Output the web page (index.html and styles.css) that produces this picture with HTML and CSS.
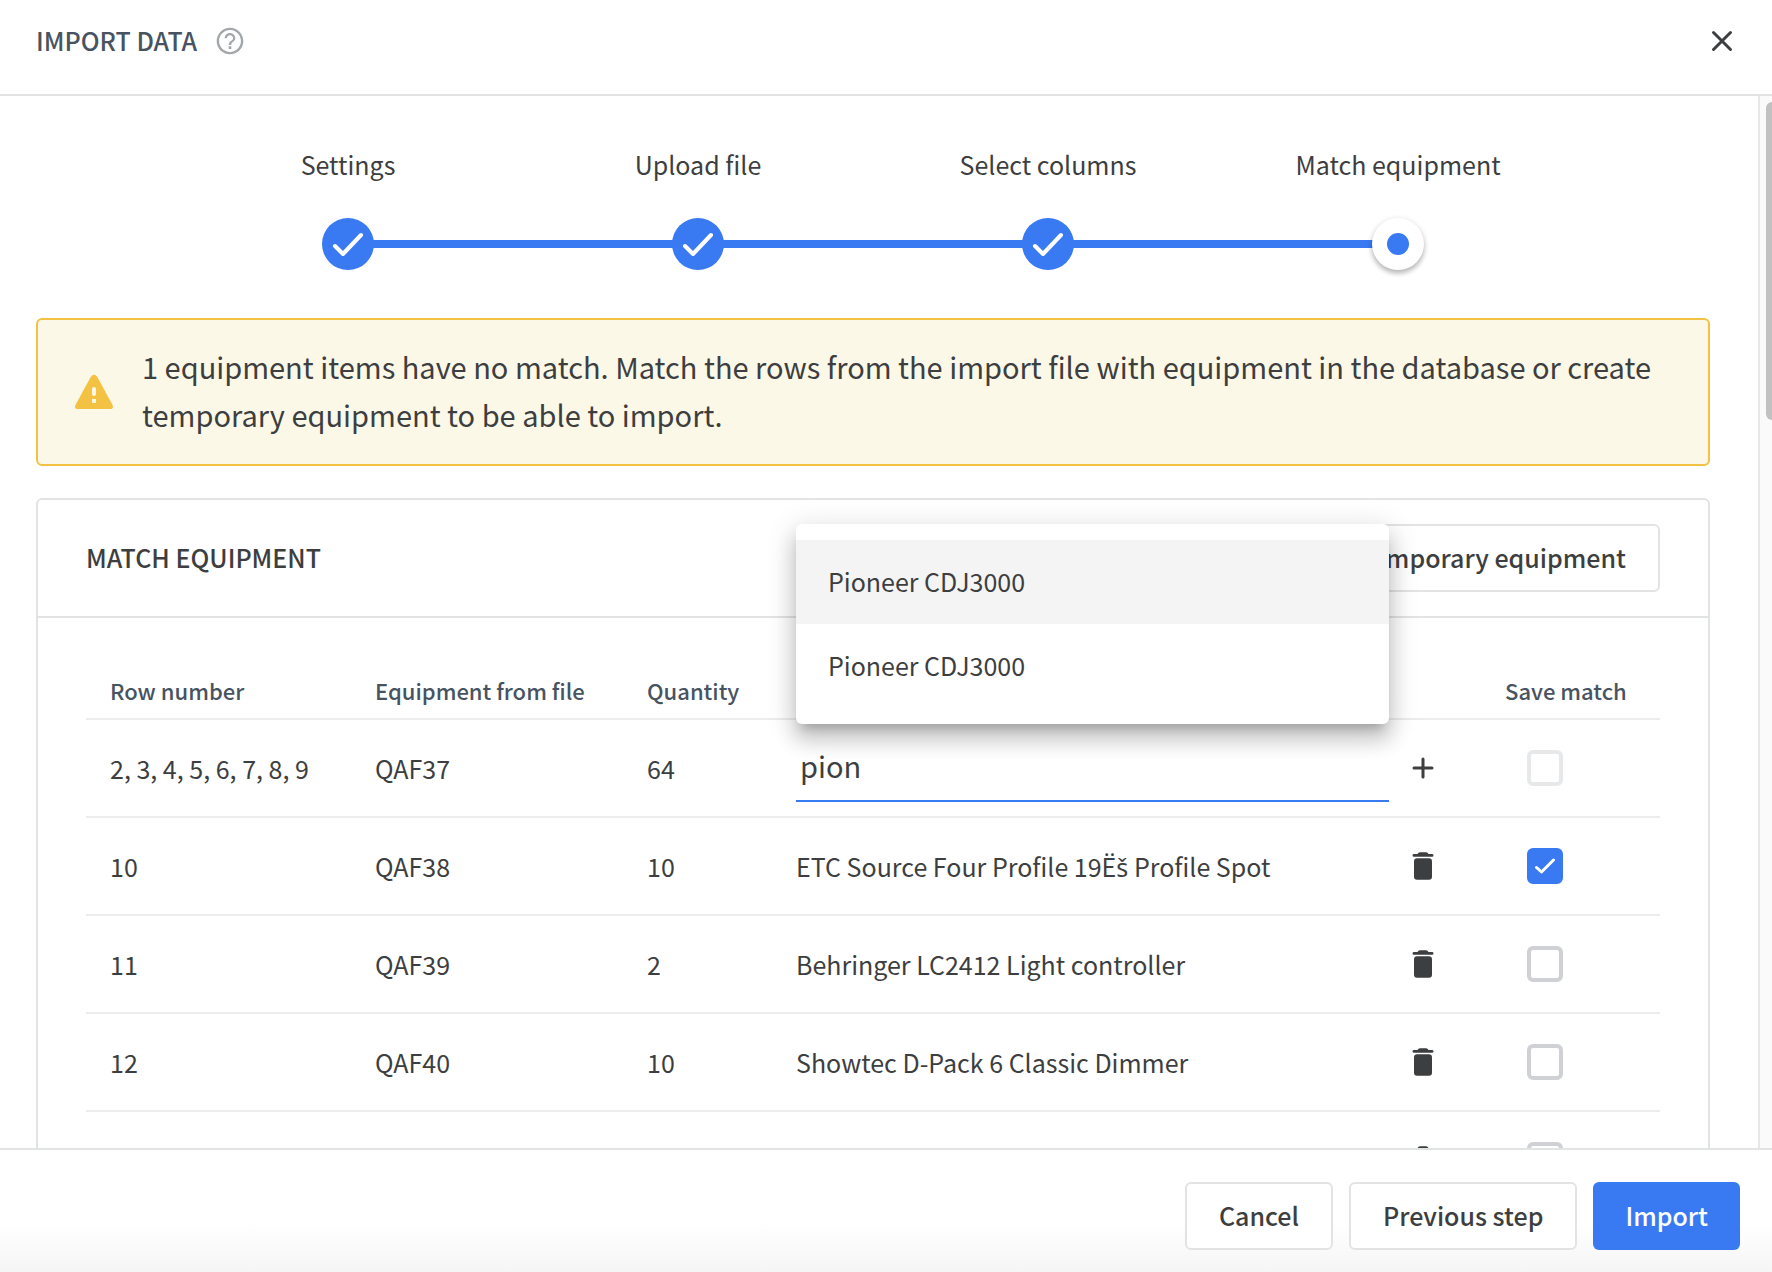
FILE: index.html
```html
<!DOCTYPE html>
<html lang="en">
<head>
<meta charset="utf-8">
<title>Import data</title>
<meta name="viewport" content="width=device-width, initial-scale=1">
<link rel="stylesheet" href="styles.css">
</head>
<body>
<svg class="sprite" aria-hidden="true">
  <symbol id="check" viewBox="0 0 32 32"><path d="M3 18l8 8L29 7" fill="none" stroke="currentColor" stroke-width="4" stroke-linecap="round" stroke-linejoin="round"/></symbol>
  <symbol id="check-small" viewBox="0 0 20 20"><path d="M1.500 11.500l5 4.500L18.500 4" fill="none" stroke="currentColor" stroke-width="3" stroke-linecap="round" stroke-linejoin="round"/></symbol>
  <symbol id="trash" viewBox="0 0 32 32"><path d="M7 4h3.500q.8-1.700 2.500-1.700h6q1.700 0 2.500 1.700H25q1.500 0 1.500 1.400T25 6.800H7q-1.500 0-1.500-1.400T7 4z" fill="currentColor"/><rect x="7" y="8.300" width="18" height="21.400" rx="3" fill="currentColor"/></symbol>
  <symbol id="plus" viewBox="0 0 32 32"><path d="M16 7v18M7 16h18" fill="none" stroke="currentColor" stroke-width="3" stroke-linecap="round"/></symbol>
</svg>
<div class="dialog">
  <header class="dialog-header">
    <h1 class="dialog-title">IMPORT DATA</h1>
    <button class="icon-button help" type="button" aria-label="Help">
      <svg class="icon" viewBox="0 0 24 24"><path fill="currentColor" d="M11 18h2v-2h-2v2zm1-16C6.480 2 2 6.480 2 12s4.480 10 10 10 10-4.480 10-10S17.520 2 12 2zm0 18.200c-4.500 0-8.200-3.700-8.200-8.200S7.500 3.800 12 3.800s8.200 3.700 8.200 8.200-3.700 8.200-8.200 8.200zM12 6c-2.210 0-4 1.790-4 4h1.700c0-1.300 1-2.300 2.300-2.300s2.300 1 2.300 2.300c0 2-3.200 1.750-3.200 5h1.800c0-2.250 3.100-2.500 3.100-5 0-2.210-1.790-4-4-4z"/></svg>
    </button>
    <button class="icon-button close" type="button" aria-label="Close">
      <svg class="icon" viewBox="0 0 32 32"><path d="M7.500 7.500l17 17M24.500 7.500l-17 17" fill="none" stroke="currentColor" stroke-width="3" stroke-linecap="round"/></svg>
    </button>
  </header>
  <div class="dialog-body">
    <main class="content">
      <ol class="stepper">
        <li class="step"><span>Settings</span><span class="dot"><svg class="icon"><use href="#check"/></svg></span></li>
        <li class="step"><span>Upload file</span><span class="dot"><svg class="icon"><use href="#check"/></svg></span></li>
        <li class="step"><span>Select columns</span><span class="dot"><svg class="icon"><use href="#check"/></svg></span></li>
        <li class="step current" aria-current="step"><span>Match equipment</span><span class="dot"></span></li>
      </ol>
      <div class="alert" role="alert">
        <svg class="alert-icon" viewBox="0 0 40 40"><path d="M16.700 5.100Q20 .5 23.300 5.100L38.300 32.500Q40.300 37 36 37H4Q-.3 37 1.700 32.500z" fill="#f3c242"/><rect x="18" y="15" width="4" height="9" rx="2" fill="#fcf8e8"/><rect x="18" y="27" width="4" height="4" fill="#fcf8e8"/></svg>
        <p class="alert-text">1 equipment items have no match. Match the rows from the import file with equipment in the database or create temporary equipment to be able to import.</p>
      </div>
      <section class="card">
        <div class="card-header">
          <h2 class="card-title">MATCH EQUIPMENT</h2>
          <button class="button" type="button">Create temporary equipment</button>
        </div>
        <div class="card-body">
          <table class="matches">
            <colgroup><col class="col-row"><col class="col-file"><col class="col-quantity"><col><col class="col-action"><col class="col-save"></colgroup>
            <thead>
              <tr><th>Row number</th><th>Equipment from file</th><th>Quantity</th><th></th><th></th><th>Save match</th></tr>
            </thead>
            <tbody>
              <tr>
                <td>2, 3, 4, 5, 6, 7, 8, 9</td><td>QAF37</td><td>64</td>
                <td class="match">
                  <div class="combo">
                    <input class="combo-input" type="text" value="pion" role="combobox" aria-expanded="true" aria-controls="options" aria-label="Equipment">
                    <ul class="options" id="options" role="listbox">
                      <li class="option active" role="option" aria-selected="true">Pioneer CDJ3000</li>
                      <li class="option" role="option" aria-selected="false">Pioneer CDJ3000</li>
                    </ul>
                  </div>
                </td>
                <td class="action"><button class="icon-button" type="button" aria-label="Create"><svg class="icon"><use href="#plus"/></svg></button></td>
                <td><input class="checkbox" type="checkbox" aria-label="Save match" disabled></td>
              </tr>
              <tr>
                <td>10</td><td>QAF38</td><td>10</td><td class="match">ETC Source Four Profile 19Ë<span class="extended">š</span> Profile Spot</td>
                <td class="action"><button class="icon-button" type="button" aria-label="Remove match"><svg class="icon"><use href="#trash"/></svg></button></td>
                <td><span class="checkbox-wrap"><input class="checkbox" type="checkbox" aria-label="Save match" checked><svg class="checkbox-mark"><use href="#check-small"/></svg></span></td>
              </tr>
              <tr>
                <td>11</td><td>QAF39</td><td>2</td><td class="match">Behringer LC2412 Light controller</td>
                <td class="action"><button class="icon-button" type="button" aria-label="Remove match"><svg class="icon"><use href="#trash"/></svg></button></td>
                <td><input class="checkbox" type="checkbox" aria-label="Save match"></td>
              </tr>
              <tr>
                <td>12</td><td>QAF40</td><td>10</td><td class="match">Showtec D-Pack 6 Classic Dimmer</td>
                <td class="action"><button class="icon-button" type="button" aria-label="Remove match"><svg class="icon"><use href="#trash"/></svg></button></td>
                <td><input class="checkbox" type="checkbox" aria-label="Save match"></td>
              </tr>
              <tr>
                <td></td><td></td><td></td><td class="match"></td>
                <td class="action"><button class="icon-button" type="button" aria-label="Remove match"><svg class="icon"><use href="#trash"/></svg></button></td>
                <td><input class="checkbox" type="checkbox" aria-label="Save match"></td>
              </tr>
            </tbody>
          </table>
        </div>
      </section>
    </main>
    <div class="scrollbar"><div class="thumb"></div></div>
  </div>
  <footer class="dialog-footer">
    <button class="button" type="button">Cancel</button>
    <button class="button" type="button">Previous step</button>
    <button class="button primary" type="button">Import</button>
  </footer>
</div>
</body>
</html>
```
FILE: styles.css
```css
* { box-sizing: border-box; }

body {
  margin: 0;
  color: #3d3e40;
  background: #fff;
  font: 400 25px/36px "Noto Sans CJK SC", "Noto Sans", sans-serif;
}

h1, h2, p, ol, ul { margin: 0; padding: 0; }
ol, ul { list-style: none; }
button, input { font: inherit; color: inherit; }

.sprite { display: none; }
.icon { display: block; width: 32px; height: 32px; }

.icon-button {
  display: block;
  padding: 0;
  border: 0;
  background: none;
}

.dialog { display: flex; flex-direction: column; height: 100vh; overflow: hidden; }

.dialog-header {
  display: flex;
  align-items: center;
  padding: 22px 34px 34px 36px;
  border-bottom: 2px solid #e2e3e3;
}
.dialog-title { padding-bottom: 2px; color: #485362; font-size: 25px; font-weight: 500; line-height: 36px; }
.help { margin-left: 17px; color: #a3a7aa; }
.close { margin-left: auto; }

.dialog-body { display: flex; flex: 1; min-height: 0; }
.content { flex: 1; min-width: 0; padding: 50px 48px 0 36px; overflow: hidden; }

.scrollbar {
  width: 14px;
  padding: 6px 0 0 6px;
  border-left: 2px solid #e7e7e7;
  background: #fafafa;
  overflow: hidden;
}
.thumb { width: 12px; height: 318px; border-radius: 6px; background: #c1c1c1; }

.stepper {
  display: grid;
  grid-template-columns: repeat(4, 1fr);
  max-width: 1400px;
  margin: 0 auto 48px;
}
.step {
  display: flex;
  flex-direction: column;
  align-items: center;
  gap: 36px;
  position: relative;
}
.step:not(:last-child)::after {
  content: "";
  position: absolute;
  left: 50%;
  bottom: 22px;
  width: 100%;
  height: 8px;
  background: #397af3;
}
.dot {
  display: flex;
  align-items: center;
  justify-content: center;
  position: relative;
  z-index: 1;
  width: 52px;
  height: 52px;
  border-radius: 50%;
  color: #fff;
  background: #397af3;
}
.current .dot {
  background: #fff;
  box-shadow: 0 2px 6px rgba(0, 0, 0, .2), 0 4px 4px rgba(0, 0, 0, .14);
}
.current .dot::before {
  content: "";
  width: 22px;
  height: 22px;
  border-radius: 50%;
  background: #397af3;
}

.alert {
  display: flex;
  align-items: center;
  gap: 28px;
  margin-bottom: 32px;
  padding: 24px 36px;
  border: 2px solid #f3c242;
  border-radius: 6px;
  background: #fcf8e8;
}
.alert-icon { flex: none; width: 40px; height: 40px; }
.alert-text { margin: -2px 0 2px; font-size: 29px; line-height: 48px; }

.card { border: 2px solid #e2e3e3; border-radius: 6px; }
.card-header {
  display: flex;
  align-items: center;
  justify-content: space-between;
  padding: 24px 48px;
  border-bottom: 2px solid #e2e3e3;
}
.card-title { padding-bottom: 2px; font-size: 25px; font-weight: 500; line-height: 36px; }
.card-body { padding: 48px; }

.button {
  height: 68px;
  padding: 0 32px 2px;
  border: 2px solid #e2e3e3;
  border-radius: 6px;
  background: #fff;
  font-weight: 500;
}
.primary { border: 0; color: #fff; background: #397af3; }

.matches { width: 100%; border-collapse: separate; border-spacing: 0; table-layout: fixed; }
.col-row { width: 265px; }
.col-file { width: 272px; }
.col-quantity { width: 149px; }
.col-action { width: 92px; }
.col-save { width: 179px; }
.matches th, .matches td {
  padding: 0 0 0 24px;
  border-bottom: 2px solid #ebecec;
  text-align: left;
  white-space: nowrap;
}
.matches th { height: 54px; padding-bottom: 4px; color: #485362; font-size: 22px; font-weight: 500; }
.matches td { height: 98px; }
.matches .action { padding-left: 18px; }
.extended { font-family: "Noto Sans", sans-serif; }

.combo { position: relative; }
.combo-input {
  display: block;
  width: 100%;
  height: 68px;
  padding: 0 4px 4px;
  border: 0;
  border-bottom: 2px solid #397af3;
  outline: 0;
  background: none;
  font-size: 29px;
}
.options {
  position: absolute;
  right: 0;
  bottom: calc(100% + 10px);
  left: 0;
  z-index: 2;
  padding: 16px 0;
  border-radius: 6px;
  background: #fff;
  box-shadow: 0 10px 10px -6px rgba(0, 0, 0, .2), 0 16px 20px 2px rgba(0, 0, 0, .14), 0 6px 28px 4px rgba(0, 0, 0, .12);
}
.option { padding: 23px 32px 25px; }
.option.active { background: #f4f4f4; }

.checkbox {
  appearance: none;
  display: block;
  width: 36px;
  height: 36px;
  margin: 0 0 0 22px;
  border: 4px solid #d0d1d5;
  border-radius: 6px;
  background: #fff;
}
.checkbox:disabled { border-color: #e7e8e9; }
.checkbox:checked { border-color: #397af3; background: #397af3; }
.checkbox-wrap { display: block; position: relative; width: 58px; }
.checkbox-mark {
  position: absolute;
  top: 8px;
  right: 8px;
  width: 20px;
  height: 20px;
  color: #fff;
  pointer-events: none;
}

.dialog-footer {
  display: flex;
  justify-content: flex-end;
  gap: 16px;
  padding: 32px 32px 22px;
  border-top: 2px solid #e2e3e3;
  background: linear-gradient(#fff 60%, #f5f5f5);
}
```
